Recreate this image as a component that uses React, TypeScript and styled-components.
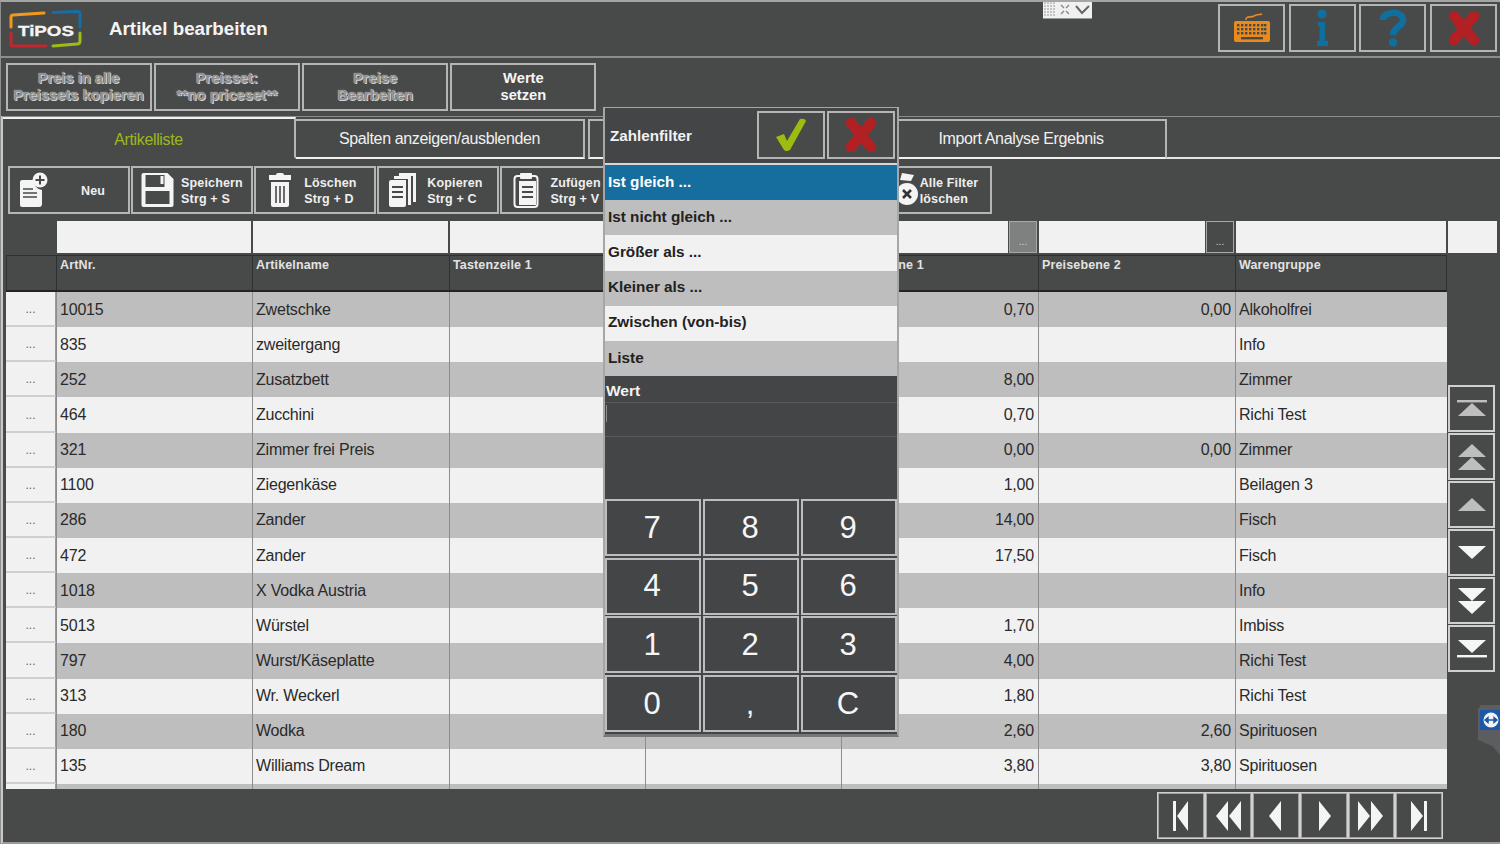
import { createGlobalStyle } from 'styled-components';
import styled from 'styled-components';

const GlobalStyle = createGlobalStyle`
  html, body {
    margin: 0;
    padding: 0;
    background: #484a49;
    font-family: "Liberation Sans", Arial, sans-serif;
  }
`;

const Page = styled.div`
  position: relative;
  width: 1500px;
  height: 844px;
  box-sizing: border-box;
  overflow: hidden;
  background: #484a49;
  border-top: 2px solid #a5a5a5;
  border-left: 1px solid #8f8f8f;
  display: flex;
  flex-direction: column;
`;

const TitleBar = styled.header`
  height: 56px;
  box-sizing: border-box;
  flex: none;
  display: flex;
  align-items: center;
  padding: 0 3px 0 8px;
  border-bottom: 2px solid #8c8c8c;
`;

const Title = styled.h1`
  margin: 0 0 0 27px;
  font-size: 18.8px;
  font-weight: 700;
  color: #f4f4f4;
  flex: 1;
`;

const TopButtons = styled.div`
  display: flex;
  gap: 3.67px;
  margin-bottom: 2px;
`;

const IconButton = styled.button`
  width: 67px;
  height: 48px;
  padding: 0;
  background: #484a49;
  border: 2px solid #b5b5b5;
  display: flex;
  align-items: center;
  justify-content: center;
`;

const ModalButton = styled(IconButton)`
  width: 68px;
`;

const ActionBar = styled.div`
  height: 58px;
  box-sizing: border-box;
  flex: none;
  display: flex;
  gap: 2.3px;
  padding: 5px 0 0 4.5px;
`;

const ActionButton = styled.button<{ $disabled?: boolean }>`
  width: 146px;
  height: 48px;
  padding: 0;
  background: #484a49;
  border: 2px solid #b5b5b5;
  font-family: inherit;
  font-size: 14.7px;
  line-height: 17px;
  font-weight: 700;
  color: ${p => (p.$disabled ? '#8d8f8f' : '#f6f6f6')};
  text-shadow: ${p => (p.$disabled ? '0 0 1px #e2e2e2, 1px 1px 0 #d0d0d0' : 'none')};
`;

const Panel = styled.section`
  flex: 1;
  min-height: 0;
  border-left: 2px solid #c9c9c9;
  border-top: 1px solid #8c8c8c;
  border-bottom: 2px solid #9a9a9a;
  display: flex;
  flex-direction: column;
`;

const TabRow = styled.div`
  height: 42px;
  flex: none;
  display: flex;
`;

const Tab = styled.div<{ $active?: boolean; $width: number }>`
  width: ${p => p.$width}px;
  box-sizing: border-box;
  display: flex;
  align-items: center;
  justify-content: center;
  font-size: 16px;
  letter-spacing: -0.36px;
  color: ${p => (p.$active ? '#9cb81a' : '#f0f0f0')};
  border-top: 2px solid ${p => (p.$active ? '#f0f0f0' : '#b5b5b5')};
  border-right: 2px solid #b5b5b5;
  border-bottom: 2px solid ${p => (p.$active ? 'transparent' : '#f0f0f0')};
  margin-top: ${p => (p.$active ? 0 : 2)}px;
  padding-top: ${p => (p.$active ? 3 : 0)}px;
`;

const HiddenTab = styled(Tab)`
  border-left: 2px solid #b5b5b5;
  margin-left: 3px;
`;

const TabFiller = styled.div`
  flex: 1;
  border-bottom: 2px solid #e4e4e4;
`;

const Toolbar = styled.div`
  height: 48px;
  flex: none;
  display: flex;
  gap: 1.1px;
  margin: 7px 0 0 5px;
`;

const ToolButton = styled.button`
  width: 122px;
  height: 48px;
  padding: 0;
  background: #484a49;
  border: 2px solid #b5b5b5;
  display: flex;
  align-items: center;
  font-family: inherit;
  color: #efefef;
  font-size: 12.5px;
  line-height: 16px;
  font-weight: 700;
  letter-spacing: 0.15px;
  text-align: left;
`;

const ToolIcon = styled.span`
  width: 48px;
  flex: none;
  display: flex;
  justify-content: center;
  align-items: center;
`;

const ToolLabel = styled.span<{ $center?: boolean }>`
  flex: ${p => (p.$center ? 1 : 'none')};
  text-align: ${p => (p.$center ? 'center' : 'left')};
  padding-top: ${p => (p.$center ? 2 : 1)}px;
`;

const GridArea = styled.div`
  flex: none;
  display: flex;
  margin: 7px 0 0 3px;
`;

const TableColumn = styled.div`
  width: 1441px;
  flex: none;
  display: flex;
  flex-direction: column;
`;

const COLUMNS = '50px 196px 197px 196px 196px 197px 197px 212px';

const FilterRow = styled.div`
  height: 34px;
  flex: none;
  display: grid;
  grid-template-columns: ${COLUMNS};
`;

const FilterCell = styled.div`
  display: flex;
  gap: 1px;
  padding: 0 1px 2px 1px;
`;

const FilterInput = styled.div`
  flex: 1;
  background: #f1f1f1;
`;

const FilterButton = styled.div<{ $active?: boolean }>`
  width: 28px;
  box-sizing: border-box;
  display: flex;
  align-items: flex-end;
  justify-content: center;
  background: ${p => (p.$active ? '#7f8080' : '#484a49')};
  border: 1px solid #a8a8a8;
  color: #d5d5d5;
  font-size: 10px;
  line-height: 16px;
  padding-bottom: 2px;
`;

const HeaderRow = styled.div`
  height: 37px;
  flex: none;
  display: grid;
  grid-template-columns: ${COLUMNS};
  border-bottom: 2px solid #242424;
  border-right: 1px solid #2f3030;
  box-sizing: border-box;
`;

const HeaderCell = styled.div`
  box-sizing: border-box;
  padding: 2px 0 0 3px;
  font-size: 12.5px;
  line-height: 15px;
  font-weight: 700;
  letter-spacing: 0.15px;
  color: #e2e2e2;
  border-left: 1px solid #2f3030;
  border-top: 1px solid #2f3030;
`;

const Rows = styled.div`
  height: 497px;
  overflow: hidden;
  flex: none;
`;

const Row = styled.div<{ $odd: boolean }>`
  height: 35.15px;
  display: grid;
  grid-template-columns: ${COLUMNS};
  background: ${p => (p.$odd ? '#bebebe' : '#f1f1f1')};
`;

const Cell = styled.div<{ $right?: boolean }>`
  box-sizing: border-box;
  display: flex;
  align-items: center;
  justify-content: ${p => (p.$right ? 'flex-end' : 'flex-start')};
  padding: 0 4px 0 3px;
  font-size: 16px;
  letter-spacing: -0.2px;
  color: #2a2a2a;
  border-left: 1px solid #8d8d8d;
  white-space: nowrap;
`;

const MoreCell = styled.div`
  background: #f1f1f1;
  box-sizing: border-box;
  display: flex;
  align-items: flex-end;
  justify-content: center;
  font-size: 12px;
  line-height: 16px;
  padding-bottom: 8px;
  color: #666;
  border-right: 1px solid #9a9a9a;
  border-bottom: 2px solid #cfcfcf;
`;

const SideColumn = styled.div`
  flex: 1;
  display: flex;
  flex-direction: column;
  align-items: flex-start;
  padding-left: 1px;
`;

const SideFilter = styled.div`
  width: 49px;
  height: 32px;
  flex: none;
  background: #f1f1f1;
`;

const ScrollButtons = styled.div`
  display: flex;
  flex-direction: column;
  gap: 1px;
  margin-top: 132px;
`;

const ScrollButton = styled.button`
  width: 47px;
  height: 47px;
  padding: 0;
  background: #484a49;
  border: 2px solid #d0d0d0;
  display: flex;
  align-items: center;
  justify-content: center;
`;

const Pager = styled.div`
  display: flex;
  margin: 3px 0 0 1154px;
`;

const PagerButton = styled.button`
  width: 47.67px;
  height: 47px;
  padding: 0;
  background: #484a49;
  border: 1px solid #d0d0d0;
  outline: 1px solid #a0a0a0;
  outline-offset: -2px;
  display: flex;
  align-items: center;
  justify-content: center;
`;

const Modal = styled.div`
  position: absolute;
  left: 602px;
  top: 105px;
  width: 296px;
  height: 630px;
  box-sizing: border-box;
  background: #444547;
  border: 2px solid #a6a6a6;
  border-top-width: 1px;
  border-bottom-width: 3px;
  border-bottom-color: #777;
  display: flex;
  flex-direction: column;
`;

const ModalHeader = styled.div`
  height: 57px;
  flex: none;
  box-sizing: border-box;
  display: flex;
  align-items: center;
  gap: 2px;
  padding: 0 2px 1px 5px;
  border-bottom: 2px solid #d8d8d8;
`;

const ModalTitle = styled.div`
  flex: 1;
  font-size: 15.2px;
  font-weight: 700;
  color: #f2f2f2;
`;

const OptionList = styled.div`
  display: flex;
  flex-direction: column;
  flex: none;
`;

const Option = styled.div<{ $tone: 'selected' | 'grey' | 'light' }>`
  height: 35.2px;
  box-sizing: border-box;
  display: flex;
  align-items: center;
  padding: 0 0 2px 3px;
  font-size: 15.3px;
  font-weight: 700;
  color: ${p => (p.$tone === 'selected' ? '#ffffff' : '#222222')};
  background: ${p =>
    p.$tone === 'selected' ? '#156e9e' : p.$tone === 'grey' ? '#bebebe' : '#f1f1f1'};
`;

const ValueLabel = styled.div`
  height: 27px;
  flex: none;
  box-sizing: border-box;
  padding: 6px 0 0 1px;
  font-size: 15.5px;
  line-height: 18px;
  font-weight: 700;
  color: #f2f2f2;
  border-bottom: 1px solid #5a5b5d;
`;

const ValueInput = styled.div`
  height: 34px;
  flex: none;
  box-sizing: border-box;
  padding: 2px 0 0 1px;
  border-bottom: 1px solid #5a5b5d;
`;

const Caret = styled.div`
  width: 1px;
  height: 17px;
  background: #8f8f8f;
`;

const Keypad = styled.div`
  flex: 1;
  display: grid;
  grid-template-columns: repeat(3, 96px);
  grid-auto-rows: 57px;
  gap: 1.6px 2px;
  align-content: end;
  padding: 0 0 2px;
`;

const Key = styled.button`
  padding: 0 2px 0 0;
  background: #444547;
  border: 2px solid #bdbdbd;
  font-family: inherit;
  font-size: 31px;
  color: #f6f6f6;
`;

const LayoutWidget = styled.div`
  position: absolute;
  left: 1042px;
  top: -2px;
  width: 49px;
  height: 18px;
  display: flex;
  align-items: center;
  background: #f0f0f0;
  border-bottom: 1px solid #999;
`;

const RemoteTab = styled.div`
  position: absolute;
  right: 0;
  top: 703px;
  width: 22px;
  height: 50px;
  background: #5b5d60;
  clip-path: polygon(3px 0, 100% 0, 100% 100%, 65% 82%, 0 70%, 0 4px);
  display: flex;
  justify-content: flex-end;
  padding-top: 5px;
  box-sizing: border-box;
`;

const TipLogo = () => (
  <svg width="73" height="38" viewBox="0 0 73 38">
    <g fill="none" strokeWidth="3" strokeLinecap="round" strokeLinejoin="round">
      <path d="M2 17 V7 Q2 5 4 5 L35 3" stroke="#ef9a1d" />
      <path d="M44 2.5 L68 1.5 Q71 1.5 71 4 V17" stroke="#156ea5" />
      <path d="M2 23 V34 Q2 36 4 36 L37 36" stroke="#c1272d" />
      <path d="M44 36 L68 34 Q71 34 71 31 V23" stroke="#9cbc1a" />
    </g>
    <text x="37" y="26" textAnchor="middle" fontFamily="Liberation Sans" fontWeight="700" fontSize="15" fill="#f4f4f4" stroke="#f4f4f4" strokeWidth="0.3" textLength="56" lengthAdjust="spacingAndGlyphs">
      TiPOS
    </text>
  </svg>
);

const KeyboardIcon = () => (
  <svg width="40" height="32" viewBox="0 0 40 32">
    <path d="M14 8 C14 3 19 6 22 4 S28 3 30 2" fill="none" stroke="#e98a1b" strokeWidth="1.6" />
    <rect x="2" y="9" width="36" height="21" rx="2" fill="#e98a1b" />
    {[12, 16, 20].map(y =>
      [5, 9, 13, 17, 21, 25, 29, 32].map(x => (
        <rect key={`${x}-${y}`} x={x} y={y} width="2.4" height="2.4" fill="#484a49" />
      ))
    )}
    <rect x="9" y="25" width="22" height="2.4" fill="#484a49" />
  </svg>
);

const InfoIcon = () => (
  <svg width="20" height="38" viewBox="0 0 20 38">
    <circle cx="10" cy="5" r="4.6" fill="#0f6f9f" />
    <path d="M6 13 H13 V32 H16 V37 H5 V32 H7.5 V17 H6 Z" fill="#0f6f9f" />
  </svg>
);

const HelpIcon = () => (
  <svg width="28" height="38" viewBox="0 0 28 38">
    <path d="M4 11 C4 2 24 1 24 11 C24 18 14 18 14 26" fill="none" stroke="#0f6f9f" strokeWidth="6.5" />
    <circle cx="14" cy="33.5" r="4.2" fill="#0f6f9f" />
  </svg>
);

const CrossIcon = () => (
  <svg width="34" height="34" viewBox="0 0 34 34">
    <path d="M7 5 L27 29 M27 5 L7 29" stroke="#b32024" strokeWidth="10.5" strokeLinecap="round" />
  </svg>
);

const CheckIcon = () => (
  <svg width="38" height="34" viewBox="0 0 38 34">
    <path d="M4 19 L12 16 L15 23 L28 1 Q33 0 34 3 L18 32 Q14 34 12 32 Z" fill="#9cbc10" />
  </svg>
);

const NewIcon = () => (
  <svg width="30" height="36" viewBox="0 0 30 36">
    <path d="M1 10 Q1 8 3 8 H15 A9 9 0 0 0 23 18 V32 Q23 35 20 35 H3 Q1 35 1 33 Z" fill="#f4f4f4" />
    <circle cx="21" cy="8" r="7.5" fill="#f4f4f4" />
    <path d="M21 3.5 V12.5 M16.5 8 H25.5" stroke="#484a49" strokeWidth="2" />
    <path d="M4 17 H14 M4 21 H18 M4 25 H18" stroke="#484a49" strokeWidth="1.6" />
  </svg>
);

const SaveIcon = () => (
  <svg width="35" height="36" viewBox="0 0 34 36">
    <path d="M3 1 H27 L33 7 V33 Q33 35 31 35 H3 Q1 35 1 33 V3 Q1 1 3 1 Z" fill="#f4f4f4" />
    <rect x="5" y="3" width="19" height="12" fill="#484a49" />
    <rect x="20" y="4" width="3" height="8" fill="#f4f4f4" />
    <rect x="5" y="19" width="24" height="13" fill="#484a49" />
  </svg>
);

const TrashIcon = () => (
  <svg width="26" height="36" viewBox="0 0 26 36">
    <path d="M9 3 Q9 1 11 1 H15 Q17 1 17 3 H24 V8 H2 V3 Z" fill="#f4f4f4" />
    <path d="M4 10 H22 V33 Q22 35 20 35 H6 Q4 35 4 33 Z" fill="#f4f4f4" />
    <path d="M9 14 V31 M13 14 V31 M17 14 V31" stroke="#484a49" strokeWidth="1.6" />
  </svg>
);

const CopyIcon = () => (
  <svg width="30" height="36" viewBox="0 0 30 36">
    <path d="M11 1 H28 V30 H25 V4 H11 Z" fill="#f4f4f4" />
    <path d="M6 4 H23 V33 H20 V7 H6 Z" fill="#f4f4f4" />
    <path d="M3 8 H18 V33 Q18 35 16 35 H3 Q1 35 1 33 V10 Q1 8 3 8 Z" fill="#f4f4f4" />
    <path d="M4 15 H15 M4 20 H15 M4 25 H15" stroke="#484a49" strokeWidth="1.8" />
  </svg>
);

const PasteIcon = () => (
  <svg width="26" height="36" viewBox="0 0 26 36">
    <rect x="1.5" y="4" width="23" height="31" rx="3" fill="none" stroke="#f4f4f4" strokeWidth="2" />
    <rect x="7" y="1" width="12" height="6" rx="1" fill="#f4f4f4" />
    <rect x="6" y="9" width="17" height="24" fill="#f4f4f4" />
    <path d="M9 15 H20 M9 20 H20 M9 25 H20" stroke="#484a49" strokeWidth="1.8" />
  </svg>
);

const ClearFilterIcon = () => (
  <svg width="48" height="36" viewBox="0 0 48 36">
    <path d="M30 1 L42 3 L39 9 L28 8 Z" fill="#f4f4f4" />
    <circle cx="35" cy="22" r="11" fill="#f4f4f4" />
    <path d="M31 18 L39 26 M39 18 L31 26" stroke="#333" strokeWidth="2.6" />
  </svg>
);

type ArrowProps = { color: string };

const ArrowTop = ({ color }: ArrowProps) => (
  <svg width="30" height="18" viewBox="0 0 30 18" fill={color}>
    <rect x="0" y="0" width="30" height="2.4" />
    <path d="M15 3 L29 16 H1 Z" />
  </svg>
);

const ArrowUpDouble = ({ color }: ArrowProps) => (
  <svg width="30" height="26" viewBox="0 0 30 26" fill={color}>
    <path d="M15 0 L29 13 H1 Z" />
    <path d="M15 13 L29 26 H1 Z" />
  </svg>
);

const ArrowUp = ({ color }: ArrowProps) => (
  <svg width="30" height="14" viewBox="0 0 30 14" fill={color}>
    <path d="M15 0 L29 13 H1 Z" />
  </svg>
);

const ArrowDown = ({ color }: ArrowProps) => (
  <svg width="30" height="14" viewBox="0 0 30 14" fill={color}>
    <path d="M1 0 H29 L15 13 Z" />
  </svg>
);

const ArrowDownDouble = ({ color }: ArrowProps) => (
  <svg width="30" height="26" viewBox="0 0 30 26" fill={color}>
    <path d="M1 0 H29 L15 13 Z" />
    <path d="M1 13 H29 L15 26 Z" />
  </svg>
);

const ArrowBottom = ({ color }: ArrowProps) => (
  <svg width="30" height="18" viewBox="0 0 30 18" fill={color}>
    <path d="M1 0 H29 L15 13 Z" />
    <rect x="0" y="15" width="30" height="2.4" />
  </svg>
);

const PagerIcon = ({ d }: { d: string }) => (
  <svg width="28" height="30" viewBox="0 0 28 30" fill="#f4f4f4">
    <path d={d} />
  </svg>
);

const pagerPaths = [
  'M6 0 H9 V30 H6 Z M21 0 V30 L10 15 Z',
  'M14 0 V30 L2 15 Z M27 0 V30 L15 15 Z',
  'M19 0 V30 L7 15 Z',
  'M9 0 L21 15 L9 30 Z',
  'M1 0 L13 15 L1 30 Z M14 0 L26 15 L14 30 Z',
  'M6 0 L18 15 L6 30 Z M19 0 H22 V30 H19 Z',
];

const rows = [
  ['10015', 'Zwetschke', '0,70', '0,00', 'Alkoholfrei'],
  ['835', 'zweitergang', '', '', 'Info'],
  ['252', 'Zusatzbett', '8,00', '', 'Zimmer'],
  ['464', 'Zucchini', '0,70', '', 'Richi Test'],
  ['321', 'Zimmer frei Preis', '0,00', '0,00', 'Zimmer'],
  ['1100', 'Ziegenkäse', '1,00', '', 'Beilagen 3'],
  ['286', 'Zander', '14,00', '', 'Fisch'],
  ['472', 'Zander', '17,50', '', 'Fisch'],
  ['1018', 'X Vodka Austria', '', '', 'Info'],
  ['5013', 'Würstel', '1,70', '', 'Imbiss'],
  ['797', 'Wurst/Käseplatte', '4,00', '', 'Richi Test'],
  ['313', 'Wr. Weckerl', '1,80', '', 'Richi Test'],
  ['180', 'Wodka', '2,60', '2,60', 'Spirituosen'],
  ['135', 'Williams Dream', '3,80', '3,80', 'Spirituosen'],
  ['', '', '', '', ''],
];

const headers = ['', 'ArtNr.', 'Artikelname', 'Tastenzeile 1', 'Tastenzeile 2', 'Preisebene 1', 'Preisebene 2', 'Warengruppe'];

const options: { label: string; tone: 'selected' | 'grey' | 'light' }[] = [
  { label: 'Ist gleich ...', tone: 'selected' },
  { label: 'Ist nicht gleich ...', tone: 'grey' },
  { label: 'Größer als ...', tone: 'light' },
  { label: 'Kleiner als ...', tone: 'grey' },
  { label: 'Zwischen (von-bis)', tone: 'light' },
  { label: 'Liste', tone: 'grey' },
];

const keys = ['7', '8', '9', '4', '5', '6', '1', '2', '3', '0', ',', 'C'];

export default function App() {
  return (
    <Page>
      <GlobalStyle />
      <TitleBar>
        <TipLogo />
        <Title>Artikel bearbeiten</Title>
        <TopButtons>
          <IconButton><KeyboardIcon /></IconButton>
          <IconButton><InfoIcon /></IconButton>
          <IconButton><HelpIcon /></IconButton>
          <IconButton><CrossIcon /></IconButton>
        </TopButtons>
      </TitleBar>

      <ActionBar>
        <ActionButton $disabled>Preis in alle<br />Preissets kopieren</ActionButton>
        <ActionButton $disabled>Preisset:<br />**no priceset**</ActionButton>
        <ActionButton $disabled>Preise<br />Bearbeiten</ActionButton>
        <ActionButton>Werte<br />setzen</ActionButton>
      </ActionBar>

      <Panel>
        <TabRow>
          <Tab $active $width={293}>Artikelliste</Tab>
          <Tab $width={289}>Spalten anzeigen/ausblenden</Tab>
          <HiddenTab $width={289} />
          <Tab $width={290}>Import Analyse Ergebnis</Tab>
          <TabFiller />
        </TabRow>

        <Toolbar>
          <ToolButton><ToolIcon><NewIcon /></ToolIcon><ToolLabel $center>Neu</ToolLabel></ToolButton>
          <ToolButton><ToolIcon><SaveIcon /></ToolIcon><ToolLabel>Speichern<br />Strg + S</ToolLabel></ToolButton>
          <ToolButton><ToolIcon><TrashIcon /></ToolIcon><ToolLabel>Löschen<br />Strg + D</ToolLabel></ToolButton>
          <ToolButton><ToolIcon><CopyIcon /></ToolIcon><ToolLabel>Kopieren<br />Strg + C</ToolLabel></ToolButton>
          <ToolButton><ToolIcon><PasteIcon /></ToolIcon><ToolLabel>Zufügen<br />Strg + V</ToolLabel></ToolButton>
          <ToolButton />
          <ToolButton />
          <ToolButton><ToolIcon><ClearFilterIcon /></ToolIcon><ToolLabel>Alle Filter<br />löschen</ToolLabel></ToolButton>
        </Toolbar>

        <GridArea>
          <TableColumn>
            <FilterRow>
              <div />
              <FilterCell><FilterInput /></FilterCell>
              <FilterCell><FilterInput /></FilterCell>
              <FilterCell><FilterInput /></FilterCell>
              <FilterCell><FilterInput /></FilterCell>
              <FilterCell><FilterInput /><FilterButton $active>...</FilterButton></FilterCell>
              <FilterCell><FilterInput /><FilterButton>...</FilterButton></FilterCell>
              <FilterCell><FilterInput /></FilterCell>
            </FilterRow>
            <HeaderRow>
              {headers.map(h => <HeaderCell key={h}>{h}</HeaderCell>)}
            </HeaderRow>
            <Rows>
              {rows.map((r, i) => (
                <Row key={i} $odd={i % 2 === 0}>
                  <MoreCell>{r[0] ? '...' : ''}</MoreCell>
                  <Cell>{r[0]}</Cell>
                  <Cell>{r[1]}</Cell>
                  <Cell />
                  <Cell />
                  <Cell $right>{r[2]}</Cell>
                  <Cell $right>{r[3]}</Cell>
                  <Cell>{r[4]}</Cell>
                </Row>
              ))}
            </Rows>
          </TableColumn>
          <SideColumn>
            <SideFilter />
            <ScrollButtons>
              <ScrollButton><ArrowTop color="#bebebe" /></ScrollButton>
              <ScrollButton><ArrowUpDouble color="#bebebe" /></ScrollButton>
              <ScrollButton><ArrowUp color="#bebebe" /></ScrollButton>
              <ScrollButton><ArrowDown color="#f6f6f6" /></ScrollButton>
              <ScrollButton><ArrowDownDouble color="#f6f6f6" /></ScrollButton>
              <ScrollButton><ArrowBottom color="#f6f6f6" /></ScrollButton>
            </ScrollButtons>
          </SideColumn>
        </GridArea>

        <Pager>
          {pagerPaths.map(d => (
            <PagerButton key={d}><PagerIcon d={d} /></PagerButton>
          ))}
        </Pager>
      </Panel>

      <Modal>
        <ModalHeader>
          <ModalTitle>Zahlenfilter</ModalTitle>
          <ModalButton><CheckIcon /></ModalButton>
          <ModalButton><CrossIcon /></ModalButton>
        </ModalHeader>
        <OptionList>
          {options.map(o => <Option key={o.label} $tone={o.tone}>{o.label}</Option>)}
        </OptionList>
        <ValueLabel>Wert</ValueLabel>
        <ValueInput><Caret /></ValueInput>
        <Keypad>
          {keys.map(k => <Key key={k}>{k}</Key>)}
        </Keypad>
      </Modal>

      <LayoutWidget>
        <svg width="48" height="17" viewBox="0 0 48 17">
          <g fill="#c4c4c4">
            {[1, 4, 7, 10].map(x => [1, 4, 7, 10, 13].map(y => (
              <rect key={`${x}-${y}`} x={x} y={y} width="2" height="2" />
            )))}
          </g>
          <path d="M18 4 L21 7 M26 4 L23 7 M18 13 L21 10 M26 13 L23 10" stroke="#888" strokeWidth="1.4" />
          <path d="M33 5 L39 12 L46 5" fill="none" stroke="#666" strokeWidth="2" />
        </svg>
      </LayoutWidget>

      <RemoteTab>
        <svg width="20" height="20" viewBox="0 0 20 20">
          <rect width="20" height="20" fill="#1c58a8" />
          <circle cx="11" cy="10" r="7.5" fill="#f2f2f2" />
          <path d="M5 10 H17 M5 10 L8 7.5 V12.5 Z M17 10 L14 7.5 V12.5 Z" stroke="#1c58a8" strokeWidth="1.4" fill="#1c58a8" />
        </svg>
      </RemoteTab>
    </Page>
  );
}
